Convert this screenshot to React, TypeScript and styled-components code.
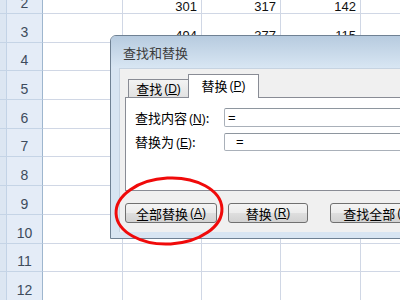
import React from 'react';
import styled, { createGlobalStyle } from 'styled-components';

const GlobalStyle = createGlobalStyle`
  html, body {
    margin: 0;
    padding: 0;
    background: #ffffff;
  }
`;

const Page = styled.div`
  position: relative;
  width: 400px;
  height: 300px;
  overflow: hidden;
  background: #ffffff;
  font-family: 'Liberation Sans', Arial, sans-serif;
`;

const Sheet = styled.div`
  display: grid;
  grid-template-columns: 43px 80px 79px 79px 80px 80px;
  grid-auto-rows: 28.7px;
  margin-top: -14.7px;
`;

const RowHeader = styled.div`
  display: flex;
  align-items: flex-end;
  justify-content: center;
  padding: 0 0 2px 7px;
  box-sizing: border-box;
  background: linear-gradient(to right, #dce6f2 0 6px, #c3d3e6 6px 7px, #e4ecf7 7px);
  border-right: 1px solid #9eb6ce;
  border-bottom: 1px solid #c5d4e6;
  color: #3d4b5c;
  font-size: 14px;
`;

const Cell = styled.div`
  display: flex;
  align-items: flex-end;
  justify-content: flex-end;
  padding: 0 4px 0 0;
  box-sizing: border-box;
  border-right: 1px solid #d0d7e5;
  border-bottom: 1px solid #d0d7e5;
  color: #111;
  font-size: 13px;
  line-height: 12px;
`;

const Dialog = styled.div`
  position: absolute;
  left: 110px;
  top: 35px;
  width: 330px;
  height: 204px;
  box-sizing: border-box;
  display: flex;
  flex-direction: column;
  border: 1px solid #6f8193;
  border-radius: 6px 6px 0 0;
  background: #d8e5f2;
  font-family: 'Noto Sans CJK SC', 'Liberation Sans', sans-serif;
  font-size: 13px;
  color: #000;
`;

const TitleBar = styled.div`
  height: 32px;
  flex: none;
  display: flex;
  align-items: center;
  padding-left: 12px;
  border-radius: 5px 5px 0 0;
  background: linear-gradient(#b7cbdf, #d8e6f3);
  color: #3c3c3c;
  font-size: 13px;
`;

const Body = styled.div`
  flex: 1;
  display: flex;
  flex-direction: column;
  margin: 0 0 7px 8px;
  padding: 5px 0 9px 5px;
  background: #f0f0f0;
  border-left: 1px solid #c6d3e1;
  border-top: 1px solid #c6d3e1;
`;

const TabRow = styled.div`
  height: 24px;
  display: flex;
  align-items: flex-end;
  padding-left: 3px;
  margin-bottom: -1px;
  position: relative;
  z-index: 1;
`;

const Tab = styled.div<{ $active?: boolean; $w: number }>`
  width: ${({ $w }) => $w}px;
  height: ${({ $active }) => ($active ? 24 : 19)}px;
  box-sizing: border-box;
  display: flex;
  align-items: center;
  justify-content: center;
  margin-left: ${({ $active }) => ($active ? -1 : 0)}px;
  border: 1px solid #898c95;
  border-bottom: ${({ $active }) => ($active ? 'none' : '1px solid #898c95')};
  background: ${({ $active }) =>
    $active ? '#ffffff' : 'linear-gradient(#f3f3f3, #e2e2e2)'};
  padding-bottom: ${({ $active }) => ($active ? 2 : 0)}px;
`;

const Panel = styled.div`
  height: 94px;
  box-sizing: border-box;
  border: 1px solid #898c95;
  background: #ffffff;
  padding: 10px 0 0 9px;
  display: grid;
  grid-template-columns: 89px 1fr;
  grid-auto-rows: min-content;
  row-gap: 5px;
  align-items: center;
`;

const Label = styled.div`
  white-space: nowrap;
  font-size: 13px;
`;

const Field = styled.div<{ $h: number; $indent: number }>`
  height: ${({ $h }) => $h}px;
  box-sizing: border-box;
  display: flex;
  align-items: center;
  padding-left: ${({ $indent }) => $indent}px;
  border: 1px solid #a9b0b9;
  border-top-color: #8e969f;
  border-radius: 2px;
  background: #fff;
  font-family: 'Liberation Sans', Arial, sans-serif;
  font-size: 13px;
`;

const ButtonRow = styled.div`
  display: flex;
  margin-top: 12px;
`;

const Button = styled.div<{ $w: number; $gap: number }>`
  width: ${({ $w }) => $w}px;
  flex: none;
  height: 20px;
  box-sizing: border-box;
  margin-left: ${({ $gap }) => $gap}px;
  display: flex;
  align-items: center;
  justify-content: center;
  border: 1px solid #707070;
  border-radius: 3px;
  background: linear-gradient(#f4f4f4 0%, #ececec 48%, #dedede 52%, #d2d2d2 100%);
  white-space: nowrap;
`;

const Key = styled.span`
  font-family: 'Liberation Sans', Arial, sans-serif;
  font-size: 12px;
  margin-left: 2px;
  & u {
    text-underline-offset: 1px;
  }
`;

const Mark = styled.svg`
  position: absolute;
  left: 0;
  top: 0;
  pointer-events: none;
`;

const Mn = ({ k }: { k: string }) => (
  <Key>
    (<u>{k}</u>)
  </Key>
);

const rows: Record<number, string[]> = {
  2: ['', '301', '317', '142', ''],
  3: ['', '494', '377', '115', ''],
};

export default function App() {
  const rowNums = Array.from({ length: 12 }, (_, i) => i + 2);
  return (
    <>
      <GlobalStyle />
      <Page>
        <Sheet>
          {rowNums.map((n) => (
            <React.Fragment key={n}>
              <RowHeader>{n}</RowHeader>
              {(rows[n] || ['', '', '', '', '']).map((v, i) => (
                <Cell key={i}>{v}</Cell>
              ))}
            </React.Fragment>
          ))}
        </Sheet>

        <Dialog>
          <TitleBar>查找和替换</TitleBar>
          <Body>
            <TabRow>
              <Tab $w={61}>
                查找<Mn k="D" />
              </Tab>
              <Tab $active $w={71}>
                替换<Mn k="P" />
              </Tab>
            </TabRow>
            <Panel>
              <Label>
                查找内容<Mn k="N" />:
              </Label>
              <Field $h={19} $indent={3}>=</Field>
              <Label>
                替换为<Mn k="E" />:
              </Label>
              <Field $h={18} $indent={11}>=</Field>
            </Panel>
            <ButtonRow>
              <Button $w={92} $gap={0}>
                全部替换<Mn k="A" />
              </Button>
              <Button $w={80} $gap={11}>
                替换<Mn k="R" />
              </Button>
              <Button $w={92} $gap={22}>
                查找全部<Mn k="I" />
              </Button>
            </ButtonRow>
          </Body>
        </Dialog>

        <Mark width="400" height="300" viewBox="0 0 400 300">
          <ellipse
            cx="169"
            cy="211"
            rx="53"
            ry="33"
            fill="none"
            stroke="#f00a0a"
            strokeWidth="3"
            transform="rotate(-3 169 211)"
          />
        </Mark>
      </Page>
    </>
  );
}
